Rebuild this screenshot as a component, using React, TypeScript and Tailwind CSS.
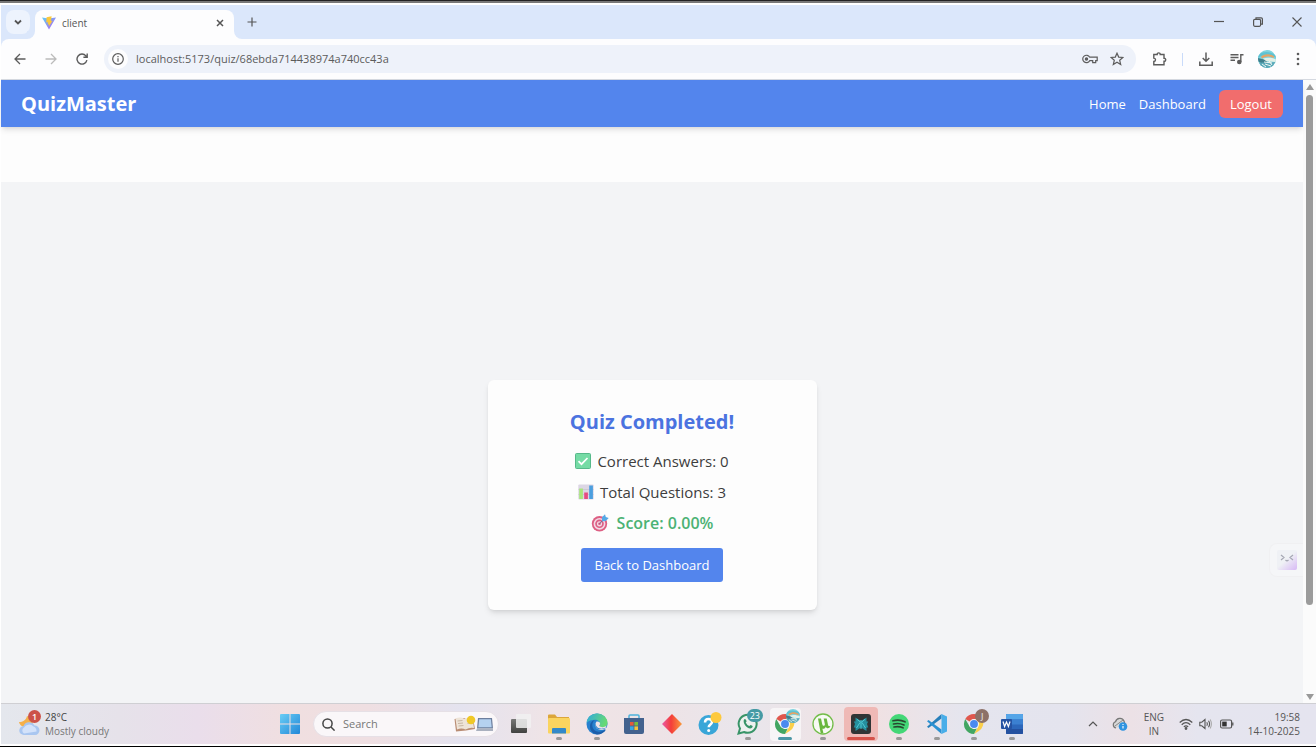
import type { ReactNode } from "react";

const icon = "fill-none stroke-current";

function ChromeLogo() {
  return (
    <svg viewBox="0 0 24 24" className="size-[22px]" aria-hidden="true">
      <path d="M12 12 2.500 6.500A11 11 0 0 1 21.500 6.500Z" fill="#e0574d" />
      <path d="M12 6.500h9.500a11 11 0 0 1-4.300 13.200L12 23l4.800-8.300Z" fill="#fbcf4a" />
      <path d="M2.500 6.500 7.200 14.700 12 17.500l3-.5L12 23A11 11 0 0 1 2.500 6.500Z" fill="#42a662" />
      <circle cx="12" cy="12" r="5.400" fill="#f6f7fb" />
      <circle cx="12" cy="12" r="4.300" fill="#4a8af0" />
    </svg>
  );
}

function Avatar({ className }: { className: string }) {
  return (
    <svg viewBox="0 0 18 18" className={className} aria-hidden="true">
      <clipPath id="avatar-clip">
        <circle cx="9" cy="9" r="9" />
      </clipPath>
      <g clipPath="url(#avatar-clip)">
        <rect width="18" height="18" fill="#7fd3de" />
        <path d="M0 5C5 1 11 1 18 5v3C12 4 6 4 0 8Z" fill="#5ec3d3" />
        <path d="M3 6.500c4-3 9-3 13.500 0l-1 1.500C11 5.500 7 6.500 4 8.500Z" fill="#e2a468" />
        <path d="M5 8.500c4-1.500 9-1 13 1v2.500L6 11Z" fill="#e3f0e6" />
        <path d="M0 8l6 1.500 4 3-2 3-8-4Z" fill="#3f7f8c" />
        <path d="M0 13c5-1 12 0 18-1v6H0Z" fill="#5ba9b8" />
        <path d="M6 12l8 1M7 14l6 2M4 14l4 3M11 11l3 4" stroke="#eef5f2" strokeWidth="1" />
      </g>
    </svg>
  );
}

function TaskbarApp({ label, state, children }: { label: string; state?: "open" | "active" | "alert"; children: ReactNode }) {
  return (
    <button aria-label={label} className="relative flex h-10 items-center justify-center">
      {state === "active" && <span className="absolute inset-x-[3px] top-1 bottom-[3px] rounded bg-white/60" />}
      {state === "alert" && <span className="absolute inset-x-[2px] top-[3px] bottom-[3px] rounded bg-[#efb9b6]" />}
      <span className="relative">{children}</span>
      {state === "open" && <span className="absolute bottom-1 h-[3px] w-[6px] rounded-full bg-[#999]" />}
      {state === "active" && <span className="absolute bottom-1 h-[3px] w-[14px] rounded-full bg-[#4b97a5]" />}
      {state === "alert" && <span className="absolute bottom-1 h-[3px] w-7 rounded-full bg-[#d5524a]" />}
    </button>
  );
}

function TabStrip() {
  return (
    <div className="flex h-[34px] shrink-0 items-end bg-[#dbe7fb] text-[#555]">
      <div className="flex w-[26px] shrink-0 self-stretch pt-[5px] pl-[5px]">
        <button aria-label="Search tabs" className="flex h-6 w-6 shrink-0 items-center justify-center rounded-lg bg-[#edf3fd]">
          <svg viewBox="0 0 10 10" className={`size-[10px] ${icon}`} strokeWidth="1.800">
            <path d="M2 3.500 5 6.500 8 3.500" />
          </svg>
        </button>
      </div>
      <div className="size-2 shrink-0 bg-[#fdfdfe]">
        <div className="size-2 rounded-br-lg bg-[#dbe7fb]" />
      </div>
      <div className="flex h-[29px] w-[199px] items-center rounded-t-lg bg-[#fdfdfe] pr-[9px] pb-1 pl-[7px]">
        <svg viewBox="0 0 14 14" className="size-[14px]" aria-hidden="true">
          <defs>
            <linearGradient id="vite" x1="0" y1="0" x2="1" y2="1">
              <stop offset="0" stopColor="#5fd0f5" />
              <stop offset="1" stopColor="#b55af0" />
            </linearGradient>
          </defs>
          <path d="M0 1.500 6.500 2.500 14 1.500 7 13.500Z" fill="url(#vite)" />
          <path d="M9.600.2 4.600 1.200 4.300 6.500 6.200 6.200 5.600 8.600 7 8.300 6.700 10.800 10.500 4.700 8.900 5Z" fill="#fbc83a" />
        </svg>
        <span className="ml-[6px] text-[10px] leading-4">client</span>
        <button aria-label="Close tab" className="ml-auto">
          <svg viewBox="0 0 10 10" className={`size-[10px] ${icon}`} strokeWidth="1.500">
            <path d="M2 2 8 8M8 2 2 8" />
          </svg>
        </button>
      </div>
      <div className="size-2 shrink-0 bg-[#fdfdfe]">
        <div className="size-2 rounded-bl-lg bg-[#dbe7fb]" />
      </div>
      <button aria-label="New tab" className="mb-3 ml-[5px]">
        <svg viewBox="0 0 10 10" className={`size-[10px] ${icon}`} strokeWidth="1.200">
          <path d="M5 .5v9M.5 5h9" />
        </svg>
      </button>
      <div className="mr-[14px] mb-3 ml-auto flex items-center gap-[29px]">
        <button aria-label="Minimize">
          <svg viewBox="0 0 10 10" className={`size-[10px] ${icon}`} strokeWidth="1.200">
            <path d="M0 4.500h10" />
          </svg>
        </button>
        <button aria-label="Restore">
          <svg viewBox="0 0 10 10" className={`size-[10px] ${icon}`} strokeWidth="1.200">
            <rect x=".6" y="2.300" width="7" height="7" rx="1.200" />
            <path d="M3 2V.8h5.200q1.200 0 1.200 1.200v5.200H8" />
          </svg>
        </button>
        <button aria-label="Close">
          <svg viewBox="0 0 10 10" className={`size-[10px] ${icon}`} strokeWidth="1.100">
            <path d="M.5.5l9 9M9.500.5l-9 9" />
          </svg>
        </button>
      </div>
    </div>
  );
}

function Toolbar() {
  return (
    <div className="shrink-0 bg-[#dbe7fb]">
      <div className="flex h-[41px] items-center rounded-t-lg border-b border-[#d5d9e0] bg-[#fdfdfe] pr-4 pl-[13px] text-[#5c5c5c]">
        <div className="flex w-[90px] items-center gap-[19px]">
          <button aria-label="Back">
            <svg viewBox="0 0 12 12" className={`size-3 ${icon}`} strokeWidth="1.300">
              <path d="M11.500 6H1.200M6 1 1 6l5 5" />
            </svg>
          </button>
          <button aria-label="Forward" className="text-[#bbb]">
            <svg viewBox="0 0 12 12" className={`size-3 ${icon}`} strokeWidth="1.300">
              <path d="M.5 6h10.300M6 1l5 5-5 5" />
            </svg>
          </button>
          <button aria-label="Reload">
            <svg viewBox="0 0 12 12" className={`size-3 ${icon}`} strokeWidth="1.400">
              <path d="M10.900 7.200A5 5 0 1 1 9.900 2.900L11 4.200M11.200.5v3.800H7.400" />
            </svg>
          </button>
        </div>
        <div className="flex h-7 flex-1 items-center rounded-full bg-[#eef2fa] pr-3 pl-1">
          <button aria-label="Site information" className="flex size-5 items-center justify-center rounded-full bg-[#fdfdfe]">
            <svg viewBox="0 0 12 12" className={`size-3 ${icon}`} strokeWidth="1.200">
              <circle cx="6" cy="6" r="5.300" />
              <path d="M6 5.300v3.400M6 3v1.300" />
            </svg>
          </button>
          <input
            aria-label="Address"
            readOnly
            value="localhost:5173/quiz/68ebda714438974a740cc43a"
            className="ml-2 min-w-0 flex-1 bg-transparent text-[11px] leading-4 text-[#5c5c5c] outline-none"
          />
          <div className="flex items-center gap-3">
            <button aria-label="Passwords">
              <svg viewBox="0 0 16 12" className={`h-3 w-4 ${icon}`} strokeWidth="1.200">
                <path d="M7.700 4.200a3.700 3.700 0 1 0 0 3.500h3v2h3v-2h1.500V4.200Z" />
                <circle cx="4.500" cy="6" r="1.100" fill="currentColor" />
              </svg>
            </button>
            <button aria-label="Bookmark">
              <svg viewBox="0 0 14 14" className={`size-[14px] ${icon}`} strokeWidth="1.200">
                <path d="M7 1.200 8.700 5.100l4.200.4-3.200 2.800 1 4.200L7 10.300l-3.700 2.200 1-4.200L1.100 5.500l4.200-.4Z" />
              </svg>
            </button>
          </div>
        </div>
        <div className="ml-4 flex items-center">
          <button aria-label="Extensions">
            <svg viewBox="0 0 16 16" className={`size-4 ${icon}`} strokeWidth="1.400">
              <path d="M1.800 3.500h3.400C5 1.300 8.400 1.300 8.200 3.500h3.800v3.800c2.300-.1 2.300 3.200 0 3v3.500H1.800v-3.300c2.300-.2 2.300-3.200 0-3.400Z" />
            </svg>
          </button>
          <span className="mr-4 ml-[14px] h-[13px] w-px bg-[#c9dbfa]" />
          <button aria-label="Downloads">
            <svg viewBox="0 0 14 14" className={`size-[14px] ${icon}`} strokeWidth="1.500">
              <path d="M7 .5v8.500M3.700 6 7 9.200 10.300 6M.8 9.500v3.700h12.400V9.500" />
            </svg>
          </button>
          <button aria-label="Media controls" className="ml-[17px]">
            <svg viewBox="0 0 14 12" className={`h-3 w-[14px] ${icon}`} strokeWidth="1.400">
              <path d="M.5 1.700h8M.5 4.500h8M.5 7.300h4.500M10.800 9V1.700h2.700" />
              <circle cx="9.300" cy="9" r="1.600" fill="currentColor" />
            </svg>
          </button>
          <button aria-label="Profile" className="ml-[14px]">
            <Avatar className="size-[18px]" />
          </button>
          <button aria-label="More" className="ml-5">
            <svg viewBox="0 0 4 14" className="h-[14px] w-1 fill-current">
              <circle cx="2" cy="2" r="1.300" />
              <circle cx="2" cy="7" r="1.300" />
              <circle cx="2" cy="12" r="1.300" />
            </svg>
          </button>
        </div>
      </div>
    </div>
  );
}

function QuizPage() {
  return (
    <div className="relative flex min-w-0 flex-1 flex-col bg-[#fdfdfd]">
      <nav className="z-10 flex h-[47px] shrink-0 items-center justify-between bg-[#5385ed] px-5 text-white shadow-md">
        <a href="#home" className="text-[20px] leading-7 font-bold">
          QuizMaster
        </a>
        <div className="flex items-center gap-[13px] text-[13px] leading-5">
          <a href="#home">Home</a>
          <a href="#dashboard">Dashboard</a>
          <button className="h-7 rounded-md bg-[#f16d6d] px-[11px]">Logout</button>
        </div>
      </nav>
      <main className="mt-[55px] flex flex-1 items-start justify-center bg-[#f3f4f6] pt-[198px]">
        <section className="flex w-[329px] flex-col items-center rounded-md bg-[#fdfdfd] p-7 text-[#3d3d3d] shadow-md">
          <h1 className="text-[20px] leading-7 font-bold text-[#4b73e0]">Quiz Completed!</h1>
          <p className="mt-[13px] flex h-6 items-center gap-[6px] text-[15px] leading-6">
            <svg viewBox="0 0 16 16" className="size-4" role="img" aria-label="Correct">
              <rect x=".5" y=".5" width="15" height="15" rx="1" fill="#75dba5" stroke="#56b98a" />
              <path d="M3.500 8.200 6.500 11.200 12.500 5" fill="none" stroke="#fff" strokeWidth="1.700" />
            </svg>
            Correct Answers: 0
          </p>
          <p className="mt-[7px] flex h-6 items-center gap-[6px] text-[15px] leading-6">
            <svg viewBox="0 0 16 16" className="size-4" role="img" aria-label="Chart">
              <rect x=".3" y=".5" width="15.400" height="15" rx="1" fill="#dcd6e4" />
              <path d="M.5 5.500h15M.5 10.500h15" stroke="#c6bfd0" strokeWidth=".7" />
              <rect x="1.200" y="4.500" width="3.700" height="10.500" fill="#a9e67c" />
              <rect x="6.200" y="8.500" width="3.700" height="6.500" fill="#e64c82" />
              <rect x="11.200" y="1.500" width="3.700" height="13.500" fill="#4c9fdf" />
            </svg>
            Total Questions: 3
          </p>
          <p className="mt-[7px] flex h-6 items-center gap-2 text-[16px] leading-6 font-semibold text-[#4bb274]">
            <svg viewBox="0 0 18 18" className="size-[18px]" role="img" aria-label="Target">
              <circle cx="8.500" cy="9.800" r="7.700" fill="#dd5f83" />
              <circle cx="8.500" cy="9.800" r="5.900" fill="#f2d8e4" />
              <circle cx="8.500" cy="9.800" r="4.300" fill="#dd5f83" />
              <circle cx="8.500" cy="9.800" r="2.600" fill="#f2d8e4" />
              <circle cx="8.500" cy="9.800" r="1.300" fill="#dd5f83" />
              <path d="M8.500 9.800 13 5" stroke="#6d6a90" strokeWidth="1" />
              <path d="M11 7.300V3.200L14 .3l.8 2.700 2.900.9-2.900 3Z" fill="#55a9e6" />
            </svg>
            Score: 0.00%
          </p>
          <button className="mt-[13px] h-[34px] rounded-[3px] bg-[#5385ed] px-[14px] text-[13px] leading-5 text-white">
            Back to Dashboard
          </button>
        </section>
      </main>
      <button
        aria-label="Assistant"
        className="absolute right-0 bottom-[126px] flex h-[34px] w-[34px] items-center justify-center rounded-l-lg border border-r-0 border-[#f0f0f2] bg-[#f5f6f8]"
      >
        <svg viewBox="0 0 20 20" className="size-5">
          <defs>
            <linearGradient id="face" x1=".3" y1=".2" x2="1" y2="1">
              <stop offset=".3" stopColor="#eff1f5" />
              <stop offset="1" stopColor="#d7b8f5" />
            </linearGradient>
          </defs>
          <rect width="20" height="20" rx="2" fill="url(#face)" />
          <path d="M4 5l3 2.500L4 10M16 5l-3 2.500 3 2.500M8.500 10q1.500 1.500 3 0" fill="none" stroke="#a6a8b4" strokeWidth="1.200" />
        </svg>
      </button>
    </div>
  );
}

function Scrollbar() {
  return (
    <div className="flex w-[13px] shrink-0 flex-col items-center bg-[#fbfbfb] pt-1 pb-[3px]">
      <svg viewBox="0 0 8 6" className="h-[6px] w-2 fill-[#999]" aria-hidden="true">
        <path d="M4 0 8 6H0Z" />
      </svg>
      <div className="mt-[5px] h-[510px] w-[7px] rounded-full bg-[#9b9b9b]" />
      <svg viewBox="0 0 8 6" className="mt-auto h-[6px] w-2 fill-[#999]" aria-hidden="true">
        <path d="M0 0h8L4 6Z" />
      </svg>
    </div>
  );
}

function Taskbar() {
  return (
    <footer className="flex h-[41px] shrink-0 items-center border-t border-[#cfcfd3] bg-[linear-gradient(to_right,#e4e7ed_0%,#e6e2ea_9%,#eadeeb_15%,#f0dfe0_22%,#efdfe2_28%,#e4e3ef_35%,#f0e4e6_42%,#eee3e6_50%,#e9e6ec_57%,#f1e1e2_66%,#e5e5ee_73%,#e4e4ee_81%,#ece1e6_86%,#e5e5ef_91%,#e5e4ef_100%)] text-[10px] leading-[14px] text-[#555]">
      <div className="flex w-[270px] shrink-0 items-center pl-4">
        <div className="relative mr-1 h-7 w-6">
          <svg viewBox="0 0 24 28" className="h-7 w-6" aria-hidden="true">
            <path d="M10 6c-1 4-4 6-8 6 1 5 8 7 12 4 3-3 2-8-4-10Z" fill="#f5b04a" />
            <path d="M7 25a4.500 4.500 0 0 1-.5-9 6 6 0 0 1 11-.5 4.700 4.700 0 0 1 .5 9.500Z" fill="#a9c6f0" />
            <path d="M7 23.500a3.500 3.500 0 0 1 0-6 6 6 0 0 1 9.500-1 5 5 0 0 1 3 5Z" fill="#d3e2fa" />
          </svg>
          <span className="absolute top-0 left-[11px] flex size-[13px] items-center justify-center rounded-full bg-[#cc5248] text-[9px] leading-none font-semibold text-white">
            1
          </span>
        </div>
        <div>
          <div className="text-[#444]">28°C</div>
          <div className="text-[#777]">Mostly cloudy</div>
        </div>
      </div>
      <button aria-label="Start" className="flex w-[38px] shrink-0 items-center justify-center">
        <svg viewBox="0 0 20 20" className="size-5">
          <defs>
            <linearGradient id="win" x1="0" y1="0" x2="1" y2="1">
              <stop offset="0" stopColor="#69cdf5" />
              <stop offset="1" stopColor="#2288d8" />
            </linearGradient>
          </defs>
          <path d="M0 1q0-1 1-1h8.500v9.500H0ZM10.500 0H19q1 0 1 1v8.500h-9.500ZM0 10.500h9.500V20H1q-1 0-1-1ZM10.500 10.500H20V19q0 1-1 1h-8.500Z" fill="url(#win)" />
        </svg>
      </button>
      <label className="ml-1 flex h-[26px] w-[186px] shrink-0 items-center rounded-full border border-[#e6e0e6] bg-[#faf7f9] pr-1 pl-2">
        <svg viewBox="0 0 13 13" className={`size-[13px] shrink-0 text-[#444] ${icon}`} strokeWidth="1.500" aria-hidden="true">
          <circle cx="5.500" cy="5.500" r="4.600" />
          <path d="M9 9l3.600 3.600" />
        </svg>
        <input
          aria-label="Search"
          placeholder="Search"
          className="ml-2 min-w-0 flex-1 bg-transparent text-[11px] leading-4 outline-none placeholder:text-[#777]"
        />
        <svg viewBox="0 0 40 18" className="h-[18px] w-10 shrink-0" aria-hidden="true">
          <path d="M.5 4 10 3l2 1 7-1 2 11-9 1.500L2 16.500Z" fill="#b98d74" />
          <path d="M1.500 3.500q5-2 9 .5l1 10.500q-4-2-8.500 0ZM10.500 4q4-2.500 8-1l1.500 10q-4-1-8.500 1.500Z" fill="#eee4d8" />
          <path d="M3.500 6l5-.5M4 8.500l5-.5M4.500 11l5-.5M13 6l4-1M13.500 8.500l4-1" stroke="#bda996" strokeWidth=".8" />
          <circle cx="17" cy="5" r="4.300" fill="#f0c826" />
          <path d="M24 3h14l1 10.500H23Z" fill="#6d7f9e" />
          <path d="M25.200 4.200h11.700l.8 8H24.300Z" fill="#b5d2f0" />
          <path d="M23 13.500h16v2.500H22Z" fill="#aab1bf" />
        </svg>
      </label>
      <button aria-label="Task view" className="ml-[3px] flex w-[38px] shrink-0 items-center justify-center">
        <svg viewBox="0 0 20 20" className="size-5">
          <defs>
            <linearGradient id="task-view" x1="0" y1="0" x2="0" y2="1">
              <stop offset="0" stopColor="#777876" />
              <stop offset="1" stopColor="#414240" />
            </linearGradient>
          </defs>
          <rect y="5" width="16" height="14" rx="1" fill="url(#task-view)" />
          <rect x="5" y="0" width="15" height="14" rx="1" fill="#f1f1f1" fillOpacity=".85" />
        </svg>
      </button>
      <div className="grid w-[491px] shrink-0 grid-cols-13">
        <TaskbarApp label="File Explorer" state="open">
          <svg viewBox="0 0 22 20" className="h-5 w-[22px]">
            <path d="M0 1.500Q0 .5 1 .5h6l2 2.500h12v6H0Z" fill="#dca63a" />
            <rect y="4" width="22" height="15.500" rx="1" fill="#fad45f" />
            <path d="M4 19.500V15q0-1 1-1h12q1 0 1 1v4.500Z" fill="#3389c9" />
          </svg>
        </TaskbarApp>
        <TaskbarApp label="Edge" state="open">
          <svg viewBox="0 0 22 22" className="size-[22px]">
            <defs>
              <linearGradient id="edge" x1="0" y1="0" x2="1" y2=".3">
                <stop offset="0" stopColor="#2fa9df" />
                <stop offset="1" stopColor="#66d975" />
              </linearGradient>
            </defs>
            <circle cx="11" cy="11" r="10.500" fill="#2780cf" />
            <path d="M.6 10C1 4 5.500.5 11 .5c6 0 10.500 4.500 10.500 9 0 3-2 5-5 5-2.500 0-3-1-3-1.800 0-.6.6-1 .6-2.200 0-2-2.300-3.800-5.100-3.800C5.500 6.700 2.500 7.500.6 10Z" fill="url(#edge)" />
            <path d="M9 7C6 9 5.500 13 7.500 16s6 3.500 9.500 1.800l3-1.300C18 20 14.500 21.500 11 21.500 7 20.500 4 18 4 13.500 4 10 6 7.500 9 7Z" fill="#1c5eaa" />
            <path d="M10.500 8.500C8 10.500 9 16.500 15 16.300c2.500 0 4.800-.8 6-2l1 .5.5 3-4-1.500c-5 2-10.200-1-9.500-6Z" fill="#efe3e8" />
            <path d="M10.500 8.500c2.500-.5 4 1 3.600 2.500-.3 1-1 1.300-.6 2 .5 1.300 5 2 7-.5l-.5 2c-2 1.500-7 1.800-9-.5-1.500-1.500-1.500-4-.5-5.500Z" fill="#efe3e8" />
          </svg>
        </TaskbarApp>
        <TaskbarApp label="Microsoft Store">
          <svg viewBox="0 0 20 20" className="size-5">
            <path d="M5 5V2q0-1 1-1h8q1 0 1 1v3" fill="none" stroke="#4fb3dc" strokeWidth="1.500" />
            <path d="M0 4h20v14q0 2-2 2H2q-2 0-2-2Z" fill="#43628e" />
            <path d="M6 8h3.600v3.600H6Z" fill="#e45a3b" />
            <path d="M10.400 8H14v3.600h-3.600Z" fill="#78bd3e" />
            <path d="M6 12.400h3.600V16H6Z" fill="#38a8e6" />
            <path d="M10.400 12.400H14V16h-3.600Z" fill="#f6c13b" />
          </svg>
        </TaskbarApp>
        <TaskbarApp label="Diamond">
          <svg viewBox="0 0 20 20" className="size-5">
            <defs>
              <linearGradient id="diamond" x1="0" y1="0" x2="1" y2="0">
                <stop offset="0" stopColor="#e95ba7" />
                <stop offset=".45" stopColor="#f43d3a" />
                <stop offset="1" stopColor="#f99b3c" />
              </linearGradient>
            </defs>
            <path d="M10 0 20 10 10 20 0 10Z" fill="url(#diamond)" />
          </svg>
        </TaskbarApp>
        <TaskbarApp label="Get Help">
          <svg viewBox="0 0 24 24" className="size-6">
            <circle cx="10.500" cy="13" r="10" fill="#39a6d8" />
            <path d="M7 10.500q0-3.500 3.500-3.500T14 10c0 2.500-3.300 2.500-3.300 5.300" fill="none" stroke="#fff" strokeWidth="2.500" />
            <circle cx="10.700" cy="18.500" r="1.500" fill="#fff" />
            <circle cx="18" cy="5.500" r="5.500" fill="#fdc93d" />
          </svg>
        </TaskbarApp>
        <TaskbarApp label="WhatsApp" state="open">
          <svg viewBox="0 0 22 22" className="size-[22px]">
            <path d="M1.500 20.500 3 15.500A9 9 0 1 1 7 19Z" fill="#edf1ef" stroke="#389468" strokeWidth="2" />
            <path d="M7 6.500c1-1.300 2-.3 2.700 1.800l-1 1.200q1.200 2.500 3.600 3.600l1.200-1c2 .5 3 1.500 1.500 2.700C11.500 17.500 5 10.500 7 6.500Z" fill="#389468" />
          </svg>
          <span className="absolute -top-1 left-[10px] rounded-full bg-[#459aa4] px-[3px] text-[9px] leading-[13px] text-white">23</span>
        </TaskbarApp>
        <TaskbarApp label="Chrome" state="active">
          <ChromeLogo />
          <Avatar className="absolute -top-1 left-3 size-[14px]" />
        </TaskbarApp>
        <TaskbarApp label="uTorrent" state="open">
          <svg viewBox="0 0 22 22" className="size-[22px]">
            <circle cx="11" cy="11" r="10" fill="#f7faf4" stroke="#72bd48" strokeWidth="1.300" />
            <path d="M6 5.500h3l1.200 5.500c.5 2.600 3 2.300 2.600 0L11.700 5.500h3l1.300 6.200c.3 1.300 1 1.700 2.300 1.300-.5 2.500-3.500 3.200-4.600.8-.5 1.800-2 2.400-3.300 1.900l1 4.300-2.700.3Z" fill="#69b73e" />
          </svg>
        </TaskbarApp>
        <TaskbarApp label="Perplexity" state="alert">
          <svg viewBox="0 0 20 20" className="size-5">
            <rect width="20" height="20" rx="3" fill="#303435" />
            <path d="M10 7 4.500 3.500V7.500H2.800L4 10l-1.200 3.500h1.700V17l5.500-3.500 5.500 3.500v-3.500h1.700L16 10l1.200-2.500h-1.700v-4Z" fill="#258f9e" />
            <path d="M10 6v9M9 8.500 5.500 14M11 8.500l3.500 5.500M9.300 8 6 5.300M10.700 8 14 5.300" stroke="#50c9d3" strokeWidth="1" />
          </svg>
        </TaskbarApp>
        <TaskbarApp label="Spotify" state="open">
          <svg viewBox="0 0 20 20" className="size-5">
            <circle cx="10" cy="10" r="10" fill="#44d777" />
            <path d="M4 6.800q6.500-1.700 12 1M4.500 10q5.500-1.400 10.500 1M5 13q5-1 9 .8" fill="none" stroke="#28482f" strokeWidth="1.700" strokeLinecap="round" />
          </svg>
        </TaskbarApp>
        <TaskbarApp label="Visual Studio Code" state="open">
          <svg viewBox="0 0 20 20" className="size-5">
            <path d="M14.500 4.500 1.500 14 0 12.700 14.500 0Z" fill="#277fba" />
            <path d="M14.500 15.500 1.500 6 0 7.300 14.500 20Z" fill="#2b91d3" />
            <path d="M14.500 0 20 2.500v15L14.500 20Z" fill="#49aee9" />
          </svg>
        </TaskbarApp>
        <TaskbarApp label="Chrome, profile J" state="open">
          <ChromeLogo />
          <span className="absolute -top-1 left-3 flex size-[14px] items-center justify-center rounded-full bg-[#8d7168] text-[9px] leading-none text-[#eee]">
            J
          </span>
        </TaskbarApp>
        <TaskbarApp label="Word" state="open">
          <svg viewBox="0 0 22 20" className="h-5 w-[22px]">
            <rect x="5" width="17" height="20" rx="1" fill="#2c67bb" />
            <path d="M5 1q0-1 1-1h15q1 0 1 1v4.500H5Z" fill="#55a5e8" />
            <path d="M5 5.500h17v5H5Z" fill="#3b80d1" />
            <path d="M5 15h17v4q0 1-1 1H6q-1 0-1-1Z" fill="#2451a0" />
            <rect y="5" width="11" height="10" rx="1" fill="#2553a3" />
            <path d="M2 7.500 3.600 12.500 5.500 8 7.400 12.500 9 7.500" fill="none" stroke="#fff" strokeWidth="1.200" />
          </svg>
        </TaskbarApp>
      </div>
      <div className="ml-auto flex shrink-0 items-center pr-4">
        <button aria-label="Show hidden icons">
          <svg viewBox="0 0 10 10" className={`size-[10px] ${icon}`} strokeWidth="1.200">
            <path d="M1 7 5 3l4 4" />
          </svg>
        </button>
        <svg viewBox="0 0 16 14" className="ml-[14px] h-[14px] w-4" role="img" aria-label="OneDrive">
          <path d="M4 11a3.200 3.200 0 0 1-.5-6.200A4.500 4.500 0 0 1 12 4l1 3" fill="#d8d8d8" stroke="#777" strokeWidth="1.200" />
          <path d="M3 9 11 3" stroke="#888" />
          <circle cx="11" cy="9.500" r="4.300" fill="#2f93e0" />
          <path d="M11 9v2.500M11 7v1" stroke="#fff" strokeWidth="1.100" />
        </svg>
        <div className="ml-[14px] w-6 text-center">
          <div>ENG</div>
          <div>IN</div>
        </div>
        <svg viewBox="0 0 14 12" className={`ml-[13px] h-3 w-[14px] ${icon}`} strokeWidth="1.200" role="img" aria-label="Wi-Fi">
          <path d="M.7 4.500q6.300-6 12.600 0M2.700 6.700q4.300-4 8.600 0M4.800 8.900q2.200-2 4.400 0" />
          <circle cx="7" cy="10.500" r=".8" fill="currentColor" />
        </svg>
        <svg viewBox="0 0 13 12" className={`ml-[6px] h-3 w-[13px] ${icon}`} strokeWidth="1.100" role="img" aria-label="Volume">
          <path d="M.8 4.200h2L6 1.500v9L2.800 7.800h-2ZM7.800 4.300q1.200 1.700 0 3.400M9.500 2.800q2.200 3.200 0 6.400" />
          <path d="M11.200 1.500q2.400 4.500 0 9" stroke="#aaa" />
        </svg>
        <svg viewBox="0 0 14 10" className="ml-2 h-[10px] w-[14px]" role="img" aria-label="Battery">
          <rect x=".6" y="1" width="11" height="8" rx="1.500" fill="none" stroke="#555" strokeWidth="1.200" />
          <rect x="2.200" y="2.600" width="4.500" height="4.800" fill="#333" />
          <path d="M12.800 3.500v3" stroke="#555" strokeWidth="1.300" />
        </svg>
        <div className="ml-[14px] text-right">
          <div>19:58</div>
          <div>14-10-2025</div>
        </div>
      </div>
    </footer>
  );
}

export default function App() {
  return (
    <div className="flex h-screen flex-col overflow-hidden border-b border-black bg-white font-['Open_Sans','Noto_Sans',sans-serif]">
      <div className="h-[3px] shrink-0 border-t border-[#222] bg-[#777]" />
      <div className="mt-[2px] mb-[2px] ml-px flex min-h-0 flex-1 flex-col">
        <TabStrip />
        <Toolbar />
        <div className="flex min-h-0 flex-1">
          <QuizPage />
          <Scrollbar />
        </div>
        <Taskbar />
      </div>
    </div>
  );
}
